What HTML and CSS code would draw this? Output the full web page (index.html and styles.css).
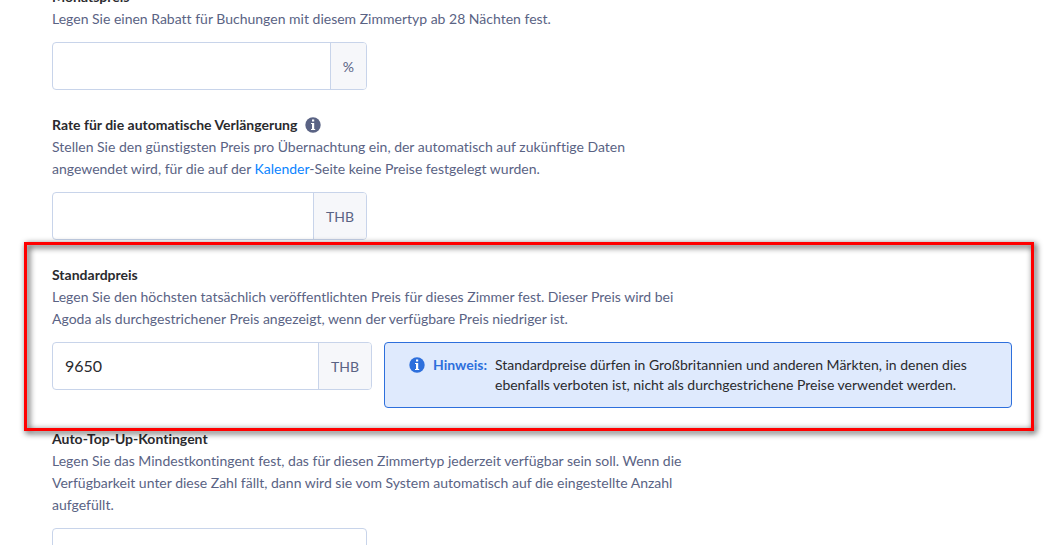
FILE: index.html
```html
<!DOCTYPE html>
<html lang="de">
<head>
  <meta charset="UTF-8" />
  <meta name="viewport" content="width=device-width, initial-scale=1.0" />
  <title>Zimmerpreise</title>
  <link rel="stylesheet" href="styles.css">
</head>
<body>
  <form class="rate-form">
    <section class="field-group">
      <label class="field-label" for="monthly">Monatspreis</label>
      <p class="field-desc">Legen Sie einen Rabatt für Buchungen mit diesem Zimmertyp ab 28 Nächten fest.</p>
      <div class="input-group">
        <input type="text" id="monthly">
        <span class="addon">%</span>
      </div>
    </section>

    <section class="field-group">
      <div class="label-row">
        <label class="field-label" for="autoRate">Rate für die automatische Verlängerung</label>
        <svg class="info-icon" viewBox="0 0 16 16" aria-hidden="true">
          <circle cx="8" cy="8" r="7.7" fill="currentColor" />
          <path d="M7 2.6h2.2v2H7zM6 5.9h3.2v6h1v1H6v-1h1v-5H6z" fill="#fff" />
        </svg>
      </div>
      <p class="field-desc">Stellen Sie den günstigsten Preis pro Übernachtung ein, der automatisch auf zukünftige Daten angewendet wird, für die auf der <a href="#">Kalender</a>-Seite keine Preise festgelegt wurden.</p>
      <div class="input-group">
        <input type="text" id="autoRate">
        <span class="addon">THB</span>
      </div>
    </section>

    <section class="field-group highlighted">
      <label class="field-label" for="standard">Standardpreis</label>
      <p class="field-desc">Legen Sie den höchsten tatsächlich veröffentlichten Preis für dieses Zimmer fest. Dieser Preis wird bei Agoda als durchgestrichener Preis angezeigt, wenn der verfügbare Preis niedriger ist.</p>
      <div class="field-row">
        <div class="input-group wide">
          <input type="text" id="standard" value="9650">
          <span class="addon">THB</span>
        </div>
        <div class="note">
          <svg class="info-icon" viewBox="0 0 16 16" aria-hidden="true">
            <circle cx="8" cy="8" r="7.7" fill="currentColor" />
            <path d="M7 2.6h2.2v2H7zM6 5.9h3.2v6h1v1H6v-1h1v-5H6z" fill="#fff" />
          </svg>
          <strong class="note-title">Hinweis:</strong>
          <p class="note-text">Standardpreise dürfen in Großbritannien und anderen Märkten, in denen dies ebenfalls verboten ist, nicht als durchgestrichene Preise verwendet werden.</p>
        </div>
      </div>
    </section>

    <section class="field-group">
      <label class="field-label" for="topUp">Auto-Top-Up-Kontingent</label>
      <p class="field-desc">Legen Sie das Mindestkontingent fest, das für diesen Zimmertyp jederzeit verfügbar sein soll. Wenn die Verfügbarkeit unter diese Zahl fällt, dann wird sie vom System automatisch auf die eingestellte Anzahl aufgefüllt.</p>
      <div class="input-group">
        <input type="text" id="topUp">
      </div>
    </section>
  </form>
</body>
</html>
```
FILE: styles.css
```css
* { box-sizing: border-box; }
html { overflow: hidden; }
body { font-family: Lato, "Liberation Sans", sans-serif; font-size: 14px; line-height: 22px; font-variant-ligatures: none; margin: 0; background: #fff; color: #2a2a2e; }
p { margin: 0; }
a { color: #0a84ff; text-decoration: none; }

/* form starts scrolled a little past its first label */
.rate-form { margin-top: -14px; padding: 0 39px 0 52px; }
.field-group { margin-bottom: 24px; }
.field-label { display: block; font-weight: bold; }
.label-row { display: flex; align-items: center; gap: 8px; color: #5a6384; }
.label-row .field-label { color: #2a2a2e; }
.field-desc { max-width: 632px; margin-bottom: 12px; color: #5a6384; }
.info-icon { width: 16px; height: 16px; flex: none; }

.input-group { display: flex; width: 315px; height: 48px; border: 1px solid #c8d4ea; border-radius: 4px; background: #fff; overflow: hidden; }
.input-group.wide { width: 320px; flex: none; }
.input-group input { flex: 1; min-width: 0; padding: 0 12px 2px; border: 0; outline: 0; background: none; font-family: inherit; font-size: 16px; color: #2a2a2e; }
.addon { display: flex; align-items: center; padding: 2px 12px 0; border-left: 1px solid #c8d4ea; background: #f6f7fa; color: #5a6384; }

.field-row { display: flex; align-items: flex-start; gap: 12px; }
.note { display: flex; flex: 1; gap: 8px; padding: 12px 24px; border: 1px solid #2d6fdc; border-radius: 4px; background: #dfeafd; line-height: 20px; color: #2d6fdc; }
.note .info-icon { margin-top: 2px; }
.note-text { color: #2a2a2e; }

/* red frame drawn around the standard price */
.highlighted { position: relative; margin-bottom: 20px; }
.highlighted::after {
  content: "";
  position: absolute;
  top: -22px;
  right: -22px;
  bottom: -23px;
  left: -28px;
  border: 3px solid #f00;
  filter: drop-shadow(2px 2px 3px rgba(0, 0, 0, 0.9));
  pointer-events: none;
}
```
